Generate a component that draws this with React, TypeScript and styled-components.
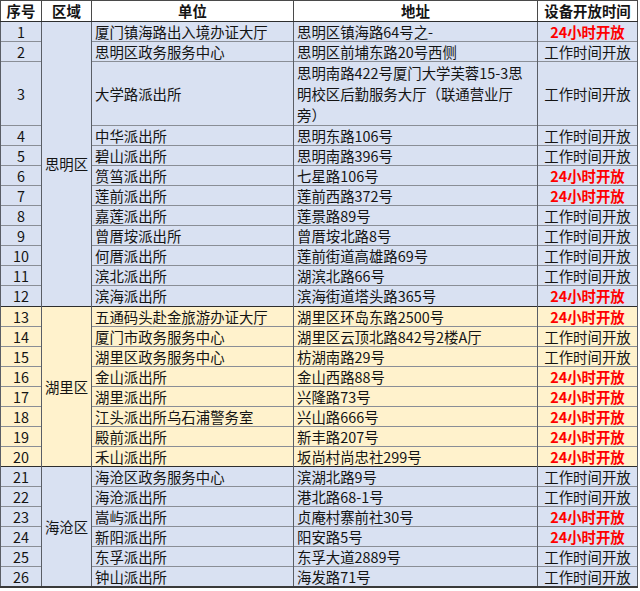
import React from "react";
import styled, { createGlobalStyle } from "styled-components";

const GlobalStyle = createGlobalStyle`
  html, body {
    margin: 0;
    padding: 0;
    background: #d4d4d4;
  }
  body {
    font-family: "Noto Sans CJK SC", "Noto Sans", sans-serif;
    color: #141414;
  }
`;

type Zone = "blue" | "yellow";

const zoneColors: Record<Zone, string> = {
  blue: "#d9e1f2",
  yellow: "#fff2cc",
};

const Sheet = styled.div`
  width: 640px;
  height: 591px;
  background: #ffffff;
  overflow: hidden;
`;

const Table = styled.table`
  width: 637px;
  border-collapse: collapse;
  table-layout: fixed;
  font-size: 14.4px;
  line-height: 20px;
  border-bottom: 2px solid #3a3a3a;
`;

const HeadCell = styled.th`
  height: 20px;
  padding: 0;
  font-weight: 700;
  text-align: center;
  background: #ffffff;
  border: 1px solid #4a4a4a;
  border-bottom: 1px solid #2e2e2e;
  white-space: nowrap;
  overflow: hidden;
`;

const Row = styled.tr<{ $zone: Zone; $tall?: boolean; $first?: boolean }>`
  height: ${(p) => (p.$tall ? "63px" : "20.05px")};
  background: ${(p) => zoneColors[p.$zone]};
  & > td {
    border-top: 1px solid ${(p) => (p.$first ? "#2e2e2e" : "#8a8e96")};
  }
`;

const Cell = styled.td<{ $align?: "left" | "center"; $wrap?: boolean }>`
  padding: 0 ${(p) => (p.$align === "left" ? "3px" : "0")};
  text-align: ${(p) => p.$align ?? "center"};
  vertical-align: middle;
  border-left: 1px solid #5a5e66;
  border-right: 1px solid #5a5e66;
  white-space: ${(p) => (p.$wrap ? "pre-line" : "nowrap")};
  overflow: hidden;
  line-height: ${(p) => (p.$wrap ? "21px" : "19px")};
`;

const ZoneCell = styled(Cell)`
  background: ${(p: { $zone: Zone }) => zoneColors[p.$zone]};
`;

const Status = styled.span<{ $open: boolean }>`
  color: ${(p) => (p.$open ? "#ff0000" : "#141414")};
  font-weight: ${(p) => (p.$open ? 700 : 400)};
`;

type Entry = [string, string, boolean];

const groups: { name: string; zone: Zone; items: Entry[] }[] = [
  {
    name: "思明区",
    zone: "blue",
    items: [
      ["厦门镇海路出入境办证大厅", "思明区镇海路64号之-", true],
      ["思明区政务服务中心", "思明区前埔东路20号西侧", false],
      ["大学路派出所", "思明南路422号厦门大学芙蓉15-3思\n明校区后勤服务大厅（联通营业厅\n旁）", false],
      ["中华派出所", "思明东路106号", false],
      ["碧山派出所", "思明南路396号", false],
      ["筼筜派出所", "七星路106号", true],
      ["莲前派出所", "莲前西路372号", true],
      ["嘉莲派出所", "莲景路89号", false],
      ["曾厝垵派出所", "曾厝垵北路8号", false],
      ["何厝派出所", "莲前街道高雄路69号", false],
      ["滨北派出所", "湖滨北路66号", false],
      ["滨海派出所", "滨海街道塔头路365号", true],
    ],
  },
  {
    name: "湖里区",
    zone: "yellow",
    items: [
      ["五通码头赴金旅游办证大厅", "湖里区环岛东路2500号", true],
      ["厦门市政务服务中心", "湖里区云顶北路842号2楼A厅", false],
      ["湖里区政务服务中心", "枋湖南路29号", false],
      ["金山派出所", "金山西路88号", true],
      ["湖里派出所", "兴隆路73号", true],
      ["江头派出所乌石浦警务室", "兴山路666号", true],
      ["殿前派出所", "新丰路207号", true],
      ["禾山派出所", "坂尚村尚忠社299号", true],
    ],
  },
  {
    name: "海沧区",
    zone: "blue",
    items: [
      ["海沧区政务服务中心", "滨湖北路9号", false],
      ["海沧派出所", "港北路68-1号", false],
      ["嵩屿派出所", "贞庵村寨前社30号", true],
      ["新阳派出所", "阳安路5号", true],
      ["东孚派出所", "东孚大道2889号", false],
      ["钟山派出所", "海发路71号", false],
    ],
  },
];

export default function App() {
  let no = 0;
  return (
    <Sheet>
      <GlobalStyle />
      <Table>
        <colgroup>
          <col style={{ width: 41 }} />
          <col style={{ width: 50 }} />
          <col style={{ width: 202 }} />
          <col style={{ width: 244 }} />
          <col style={{ width: 100 }} />
        </colgroup>
        <thead>
          <tr>
            <HeadCell>序号</HeadCell>
            <HeadCell>区域</HeadCell>
            <HeadCell>单位</HeadCell>
            <HeadCell>地址</HeadCell>
            <HeadCell>设备开放时间</HeadCell>
          </tr>
        </thead>
        <tbody>
          {groups.map((g) =>
            g.items.map(([unit, addr, open], i) => {
              no += 1;
              const tall = addr.includes("\n");
              return (
                <Row key={no} $zone={g.zone} $tall={tall} $first={i === 0}>
                  <Cell>{no}</Cell>
                  {i === 0 && (
                    <ZoneCell $zone={g.zone} rowSpan={g.items.length}>
                      {g.name}
                    </ZoneCell>
                  )}
                  <Cell $align="left">{unit}</Cell>
                  <Cell $align="left" $wrap={tall}>
                    {addr}
                  </Cell>
                  <Cell>
                    <Status $open={open}>
                      {open ? "24小时开放" : "工作时间开放"}
                    </Status>
                  </Cell>
                </Row>
              );
            })
          )}
        </tbody>
      </Table>
    </Sheet>
  );
}
